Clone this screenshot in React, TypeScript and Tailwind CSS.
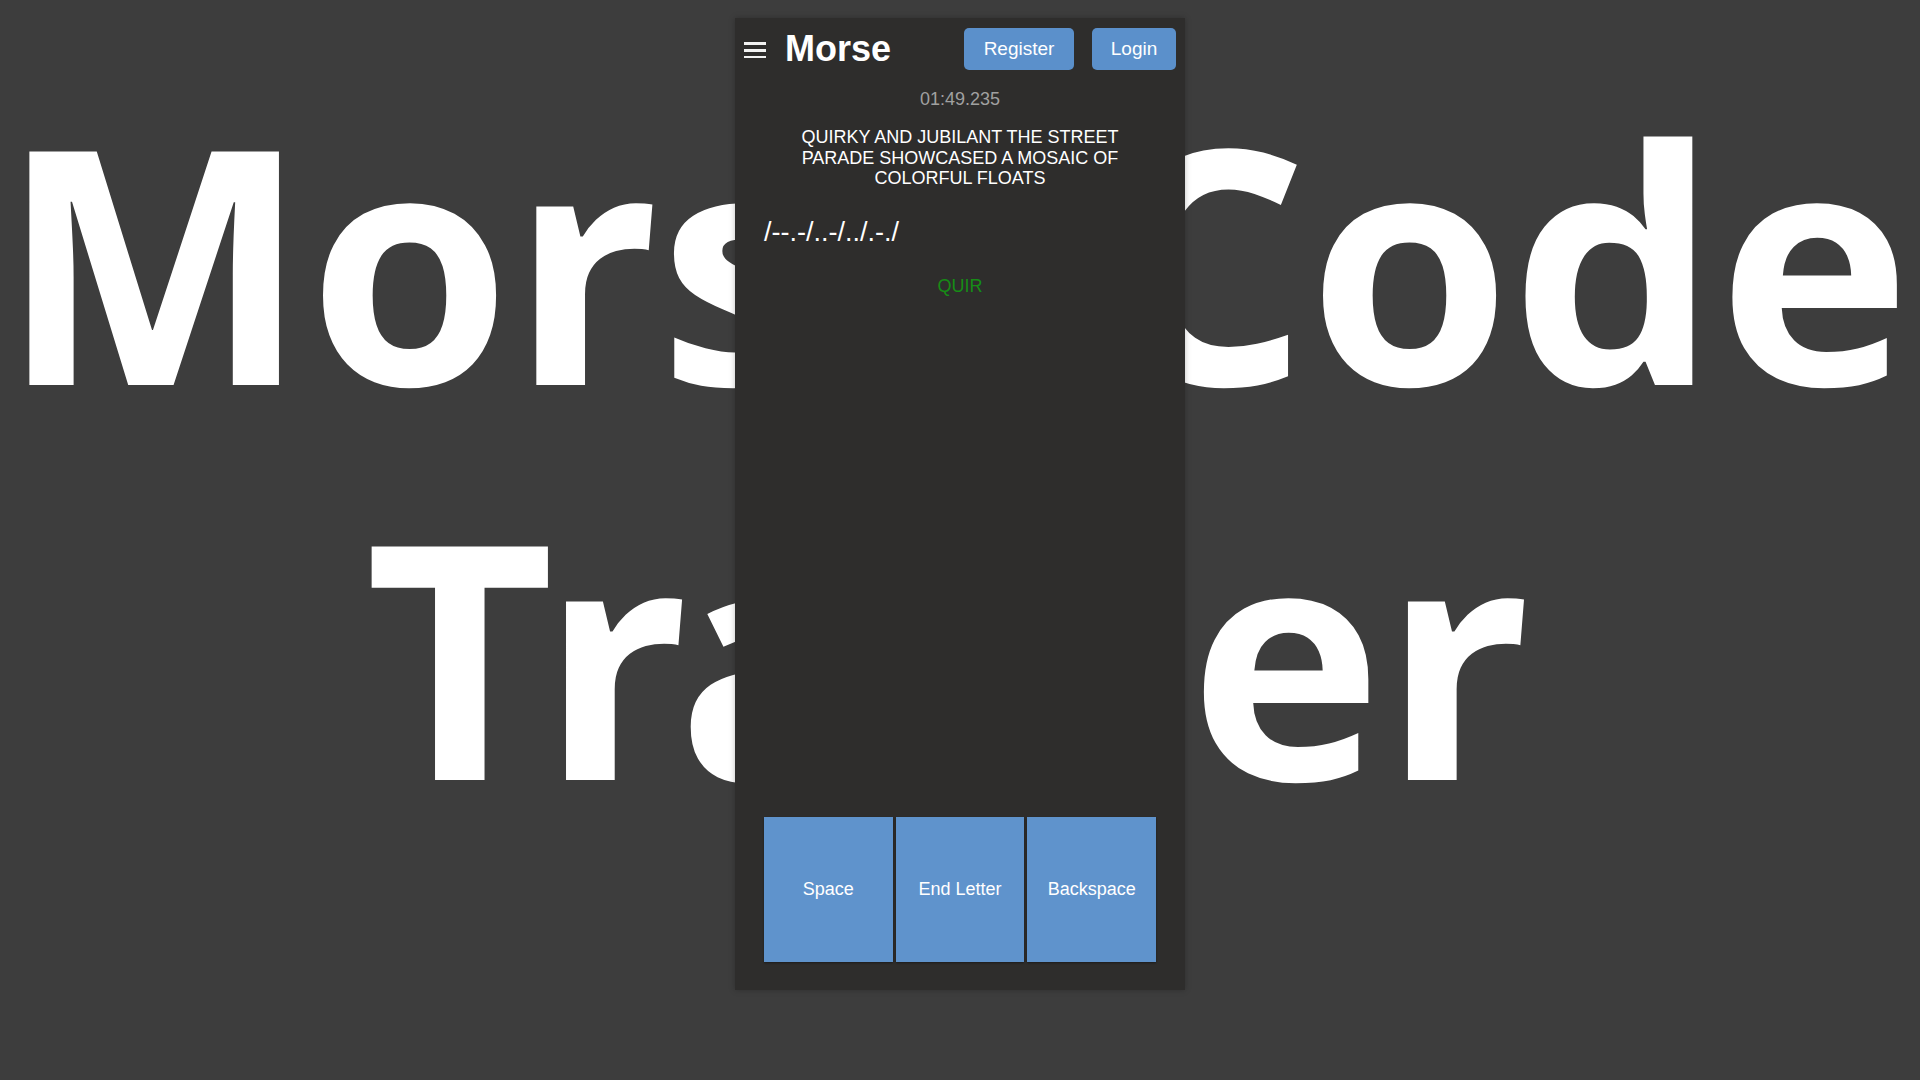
export default function App() {
  return (
    <div className="grid h-screen w-full grid-cols-1 overflow-hidden bg-[#3d3d3d]">
      {/* background title */}
      <div className="[grid-area:1/1] min-w-0 pt-[61px] pr-[24px] text-center font-['Open_Sans',sans-serif] text-[327px] font-bold leading-[395px] text-white">
        <div className="whitespace-nowrap">Morse Code</div>
        <div className="whitespace-nowrap">
          <span className="-mr-[14px]">T</span>r<span className="-ml-[12px]">a</span>iner
        </div>
      </div>

      {/* app panel */}
      <div className="[grid-area:1/1] z-10 flex min-w-0 justify-center">
        <div className="mt-[18px] flex h-[972px] w-[450px] flex-col bg-[#2e2d2c] px-[29px] pt-[10px] pb-[28px] font-['Liberation_Sans',Arial,sans-serif] text-white shadow-[0_0_6px_rgba(0,0,0,0.25)]">
          <header className="-mx-[20px] flex h-[42px] items-center">
            <svg width="22" height="18" viewBox="0 0 22 18" className="mr-[19px]">
              <rect x="0" y="2" width="22" height="3" fill="#f2f2f2" />
              <rect x="0" y="9" width="22" height="3" fill="#f2f2f2" />
              <rect x="0" y="16" width="22" height="3" fill="#f2f2f2" />
            </svg>
            <h1 className="text-[36px] font-bold leading-none">Morse</h1>
            <div className="ml-auto flex gap-[18px]">
              <button className="h-[42px] w-[110px] rounded-[5px] bg-[#5b90cb] text-[19px] text-white">Register</button>
              <button className="h-[42px] w-[84px] rounded-[5px] bg-[#5b90cb] text-[19px] text-white">Login</button>
            </div>
          </header>

          <div className="mt-[19px] text-center text-[18px] leading-[20px] text-[#a0a0a0]">01:49.235</div>

          <p className="mx-auto mt-[18px] w-[350px] text-center text-[18px] leading-[20.5px] uppercase">
            Quirky and jubilant the street parade showcased a mosaic of colorful floats
          </p>

          <div className="mt-[28px] text-[27px] leading-[30px]">/--.-/..-/../.-./</div>

          <div className="mt-[29px] text-center text-[18px] leading-[20px] text-[#168c16]">QUIR</div>

          <div className="flex-1" />

          <div className="flex h-[145px] gap-[3px]">
            <button className="flex-1 bg-[#5f93cc] text-[18px] text-white shadow-[0_1px_2px_rgba(0,0,0,0.4)]">Space</button>
            <button className="flex-1 bg-[#5f93cc] text-[18px] text-white shadow-[0_1px_2px_rgba(0,0,0,0.4)]">End Letter</button>
            <button className="flex-1 bg-[#5f93cc] text-[18px] text-white shadow-[0_1px_2px_rgba(0,0,0,0.4)]">Backspace</button>
          </div>
        </div>
      </div>
    </div>
  );
}
